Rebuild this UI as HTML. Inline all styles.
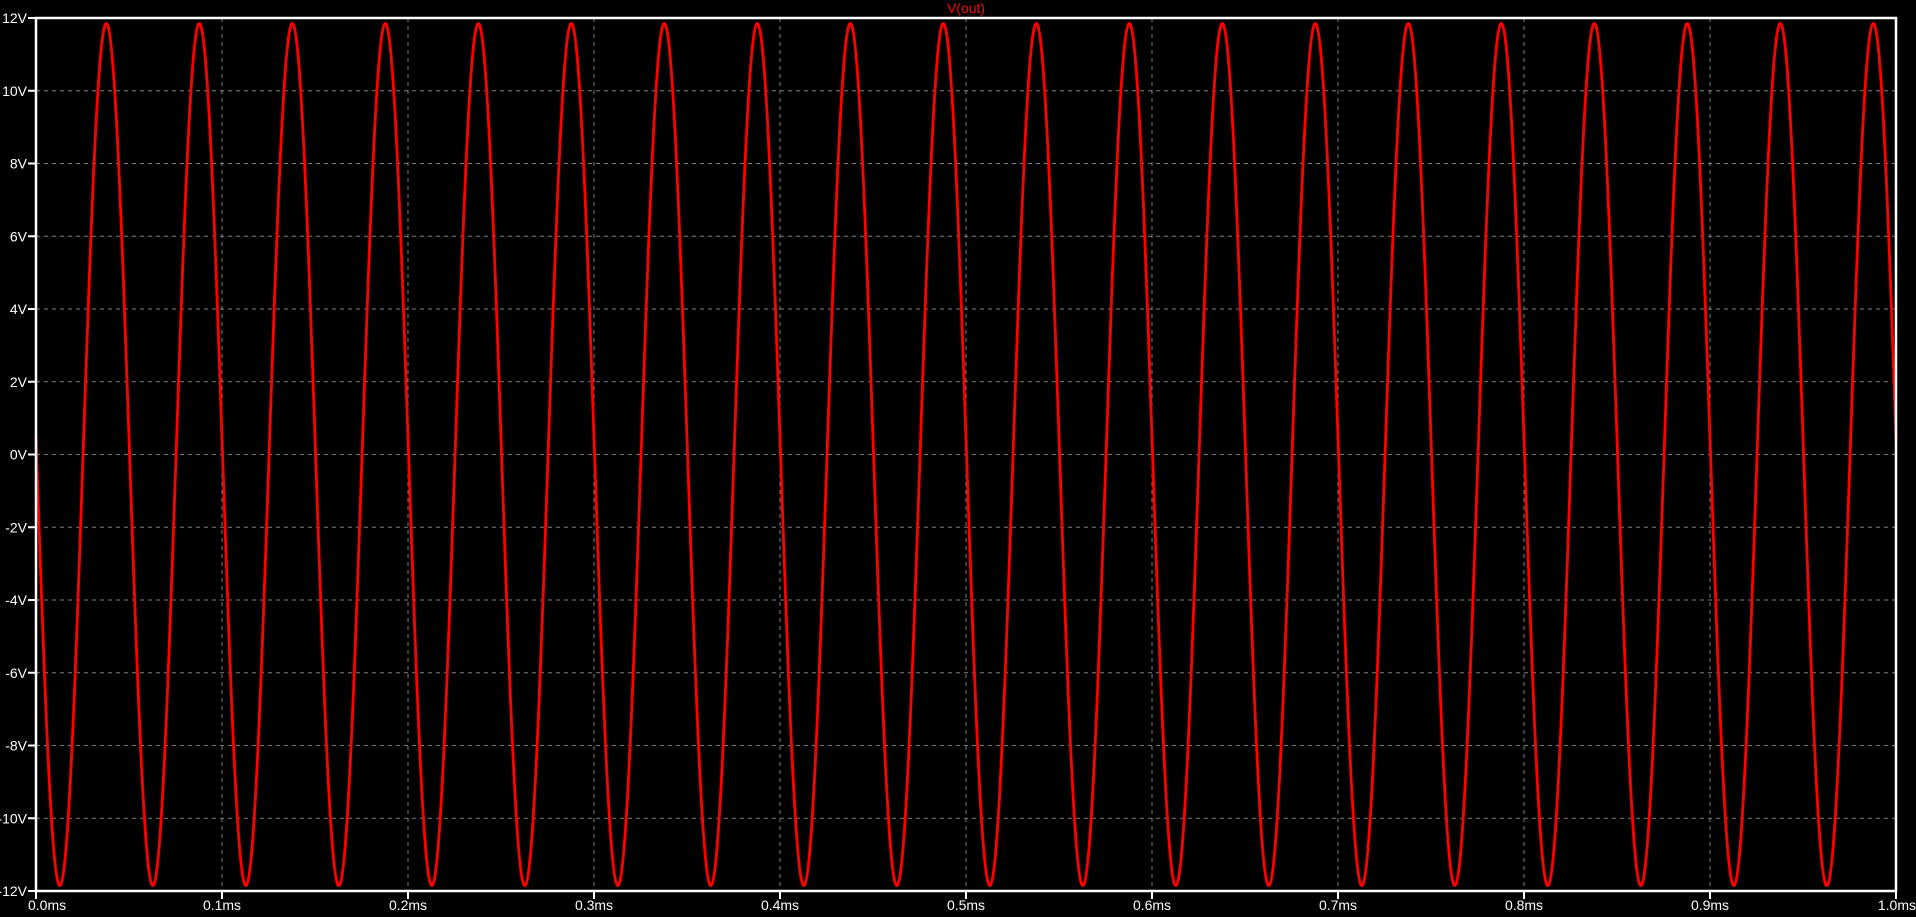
<!DOCTYPE html>
<html><head><style>
html,body{margin:0;padding:0;background:#000;}
svg{display:block;font-family:"Liberation Sans",sans-serif;}
</style></head><body>
<svg id="s" width="1916" height="917" xmlns="http://www.w3.org/2000/svg">
<rect width="1916" height="917" fill="#000"/>
<g id="grid" stroke="#808080" stroke-width="1" stroke-dasharray="4,4"></g>
<g id="lab" fill="#fff" font-size="14"></g>
<text x="966" y="13" fill="#ff0000" font-size="14" text-anchor="middle">V(out)</text>
<path id="w" fill="none" stroke="#ff0000" stroke-width="2.8"/>
<rect x="36" y="18" width="1860" height="873" fill="none" stroke="#fff" stroke-width="2.5"/>
</svg>
<script>
var L=36,T=18,R=1896,B=891,W=R-L,H=B-T,ns="http://www.w3.org/2000/svg";
var g=document.getElementById('grid'),lab=document.getElementById('lab');
function el(p,t,a){var e=document.createElementNS(ns,t);for(var k in a)e.setAttribute(k,a[k]);p.appendChild(e);return e;}
for(var i=0;i<=12;i++){var y=T+H*i/12,v=12-2*i;
 if(i>0&&i<12)el(g,'line',{x1:L,y1:y,x2:R,y2:y});
 el(lab,'line',{x1:L-8,y1:y,x2:L,y2:y,stroke:'#fff','stroke-width':2});
 var t=el(lab,'text',{x:L-9,y:y+5,'text-anchor':'end'});t.textContent=v+'V';}
for(var i=0;i<=10;i++){var x=L+W*i/10;
 if(i>0&&i<10)el(g,'line',{x1:x,y1:T,x2:x,y2:B});
 el(lab,'line',{x1:x,y1:B,x2:x,y2:B+8,stroke:'#fff','stroke-width':2});
 var t=el(lab,'text',{x:i==10?x+20:(i==0?x-8:x),y:B+19,'text-anchor':i==10?'end':(i==0?'start':'middle')});
 t.textContent=(i==10?'1.0':'0.'+i)+'ms';}
var ph=Math.asin(0.45/11.85);
var d='';for(var px=0;px<=W;px+=0.5){var tt=px/W;var v=-11.85*Math.sin(2*Math.PI*20*tt-ph);
 var y=T+(12-v)/24*H;d+=(px?'L':'M')+(L+px).toFixed(1)+' '+y.toFixed(1);}
document.getElementById('w').setAttribute('d',d);
</script>
</body></html>
